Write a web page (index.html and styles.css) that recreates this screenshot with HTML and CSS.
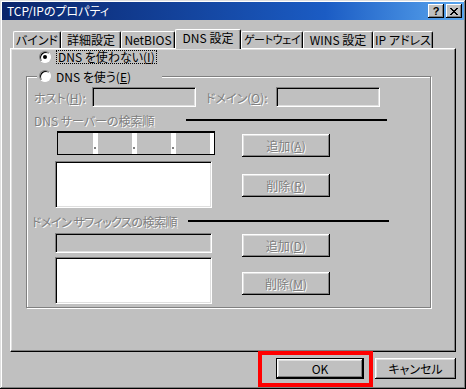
FILE: index.html
```html
<html>
<head>
<meta name="viewport" content="width=device-width,initial-scale=1.0">
<title>TCP/IPのプロパティ</title>
<link rel="stylesheet" href="styles.css">
</head>
<body>
<div class="window">
<div class="titlebar">
<span class="title">TCP/IPのプロパティ</span>
<div class="caps">
<span class="cap help">?</span>
<span class="cap"><svg width="8" height="7" viewBox="0 0 8 7"><path d="M0 0h2v1h1v1h2v-1h1v-1h2v1h-1v1h-1v1h-1v1h1v1h1v1h1v1h-2v-1h-1v-1h-2v1h-1v1h-2v-1h1v-1h1v-1h1v-1h-1v-1h-1v-1h-1z" fill="#000"/></svg></span>
</div>
</div>

<div class="tabs">
<div class="tab t1">バインド</div>
<div class="tab t2">詳細設定</div>
<div class="tab t3">NetBIOS</div>
<div class="tab active">DNS 設定</div>
<div class="tab t5">ゲートウェイ</div>
<div class="tab t6">WINS 設定</div>
<div class="tab t7">IP アドレス</div>
</div>

<div class="panel">
<div class="radio-row">
<span class="radio on"></span>
<span class="focus">DNS を使わない(<u>I</u>)</span>
</div>

<div class="group">
<div class="legend">
<span class="radio"></span>
<span>DNS を使う(<u>E</u>)</span>
</div>

<div class="host-row">
<span class="dis lbl-host">ホスト(<u>H</u>):</span>
<div class="edit short"></div>
<span class="dis lbl-domain">ドメイン(<u>O</u>):</span>
<div class="edit short"></div>
</div>

<div class="section">
<span class="dis sec-label">DNS サーバーの検索順</span>
<span class="rule"></span>
</div>
<div class="pair">
<div class="col">
<div class="ip">
<span class="oct first"></span><span class="dot"></span>
<span class="oct"></span><span class="dot"></span>
<span class="oct"></span><span class="dot"></span>
<span class="oct"></span><span class="tail"></span>
</div>
<div class="list"></div>
</div>
<div class="btn-col top1">
<div class="btn dis">追加(<u>A</u>)</div>
<div class="btn dis gap17">削除(<u>R</u>)</div>
</div>
</div>

<div class="section second">
<span class="dis sec-label wide">ドメイン サフィックスの検索順</span>
<span class="rule"></span>
</div>
<div class="pair">
<div class="col">
<div class="edit suffix"></div>
<div class="list tight"></div>
</div>
<div class="btn-col top2">
<div class="btn dis">追加(<u>D</u>)</div>
<div class="btn dis gap15">削除(<u>M</u>)</div>
</div>
</div>
</div>
</div>

<div class="footer">
<div class="btn default">OK</div>
<div class="btn cancel">キャンセル</div>
</div>

<div class="highlight"></div>
</div>
</body>
</html>
```

FILE: styles.css
```css
body
{
margin:0;
background:#c0c0c0;
font-family:"Noto Sans CJK JP","Liberation Sans",sans-serif;
font-size:12px;
font-feature-settings:"palt";
color:#000;
}
u
{
text-decoration:underline;
text-underline-offset:1px;
}
.window
{
position:relative;
width:466px;
height:389px;
box-sizing:border-box;
padding:2px;
background:#c0c0c0;
box-shadow:inset -1px -1px #000,inset 1px 1px #dfdfdf,inset -2px -2px #808080,inset 2px 2px #fff;
}
.titlebar
{
height:18px;
display:flex;
align-items:center;
justify-content:space-between;
padding:0 0 0 5px;
background:linear-gradient(to right,#0a246a,#1b5cc4 70%,#5aa6ee);
color:#fff;
}
.title
{
line-height:18px;
}
.caps
{
display:flex;
gap:2px;
padding-right:2px;
}
.cap
{
width:16px;
height:14px;
box-sizing:border-box;
background:#c0c0c0;
display:flex;
align-items:center;
justify-content:center;
box-shadow:inset -1px -1px #000,inset 1px 1px #fff,inset -2px -2px #808080;
}
.help
{
color:#000;
font-family:"Liberation Sans",sans-serif;
font-weight:bold;
font-size:11px;
line-height:14px;
}
.tabs
{
display:flex;
align-items:flex-end;
height:19px;
margin-top:9px;
padding-left:11px;
}
.tab
{
height:17px;
box-sizing:border-box;
border-top:1px solid #fff;
border-left:1px solid #fff;
border-right:1px solid #000;
border-radius:2px 2px 0 0;
box-shadow:inset -1px 0 #808080;
text-align:center;
line-height:15px;
white-space:nowrap;
overflow:hidden;
}
.t1{width:48px;}
.t2{width:60px;}
.t3{width:54px;}
.t5{width:62px;font-size:11px;letter-spacing:-0.4px;}
.t6{width:70px;}
.t7{width:60px;}
.tab.active
{
position:relative;
z-index:1;
width:66px;
height:20px;
margin-bottom:-1px;
background:#c0c0c0;
line-height:16px;
}
.panel
{
width:446px;
height:304px;
box-sizing:border-box;
margin-left:8px;
border:1px solid;
border-color:#fff #000 #000 #fff;
box-shadow:inset -1px -1px #808080,inset 1px 1px #dfdfdf;
padding:1px 0 0 15px;
}
.radio-row
{
display:flex;
align-items:center;
height:14px;
margin-left:13px;
}
.radio
{
width:12px;
height:12px;
box-sizing:border-box;
border-radius:50%;
background:#fff;
border:1px solid;
border-color:#808080 #fff #fff #808080;
box-shadow:inset 1px 1px #000;
display:flex;
align-items:center;
justify-content:center;
margin-right:5px;
}
.radio.on::after
{
content:"";
width:4px;
height:4px;
border-radius:50%;
background:#000;
}
.focus
{
border:1px dotted #000;
padding:0 1px;
line-height:12px;
}
.group
{
width:405px;
height:232px;
box-sizing:border-box;
margin-top:12px;
border:1px solid #808080;
box-shadow:1px 1px #fff,inset 1px 1px #fff;
padding-left:7px;
}
.legend
{
display:flex;
align-items:center;
width:123px;
height:14px;
margin:-8px 0 0 3px;
padding-left:2px;
background:#c0c0c0;
}
.dis
{
color:#808080;
text-shadow:1px 1px 0 #fff;
}
.host-row
{
display:flex;
align-items:center;
margin-top:4px;
height:20px;
}
.lbl-host
{
width:58px;
}
.lbl-domain
{
width:70px;
margin-left:10px;
}
.edit
{
height:20px;
box-sizing:border-box;
border:1px solid;
border-color:#808080 #fff #fff #808080;
box-shadow:inset 1px 1px #000,inset -1px -1px #dfdfdf;
}
.short
{
width:104px;
}
.section
{
display:flex;
align-items:center;
height:14px;
margin-top:6px;
}
.section.second
{
margin-top:6px;
margin-left:-2px;
}
.sec-label
{
width:152px;
white-space:nowrap;
}
.sec-label.wide
{
width:156px;
letter-spacing:-0.5px;
}
.rule
{
width:201px;
height:2px;
background:#000;
}
.pair
{
display:flex;
margin-left:21px;
}
.col
{
width:160px;
}
.ip
{
display:flex;
height:24px;
box-sizing:border-box;
margin:4px 0 0 2px;
border:1px solid #000;
border-top-width:2px;
background:#fff;
}
.oct
{
width:34px;
background:#c0c0c0;
}
.oct.first
{
width:35px;
}
.dot
{
width:5px;
position:relative;
}
.dot::after
{
content:"";
position:absolute;
left:1px;
bottom:5px;
width:2px;
height:2px;
background:#808080;
}
.tail
{
width:4px;
}
.list
{
width:157px;
height:47px;
box-sizing:border-box;
margin-top:6px;
background:#fff;
border:1px solid;
border-color:#808080 #fff #fff #808080;
box-shadow:inset 1px 1px #000,inset -1px -1px #dfdfdf;
}
.list.tight
{
margin-top:4px;
}
.suffix
{
width:157px;
margin-top:5px;
}
.btn-col
{
margin-left:27px;
}
.top1
{
padding-top:7px;
}
.top2
{
padding-top:6px;
}
.btn
{
width:88px;
height:23px;
box-sizing:border-box;
display:flex;
align-items:center;
justify-content:center;
background:#c0c0c0;
box-shadow:inset -1px -1px #000,inset 1px 1px #fff,inset -2px -2px #808080,inset 2px 2px #dfdfdf;
}
.gap17
{
margin-top:17px;
}
.gap15
{
margin-top:15px;
}
.footer
{
display:flex;
justify-content:flex-end;
gap:11px;
margin-top:6px;
padding-right:8px;
}
.footer .btn
{
height:21px;
}
.btn.default
{
border:1px solid #000;
}
.btn.cancel
{
width:81px;
}
.highlight
{
position:absolute;
left:258px;
top:351px;
width:115px;
height:36px;
box-sizing:border-box;
border:4px solid #f00;
}
```
